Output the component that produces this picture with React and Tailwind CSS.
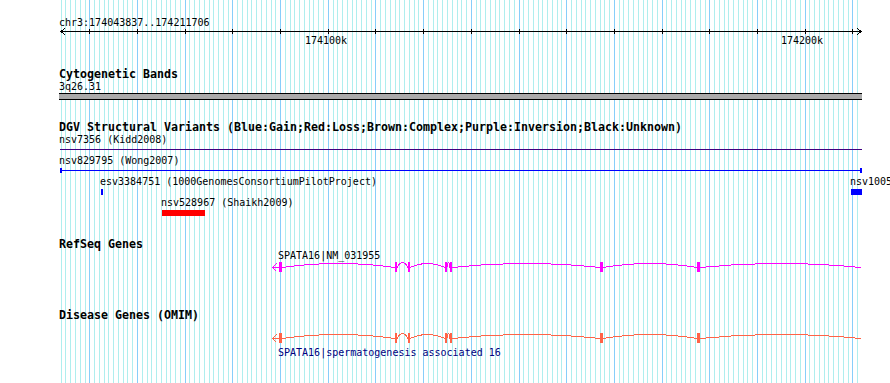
import React from "react";

const STEP = 4.769;
const ORIGIN = 89.3;

const gridLines = [];
for (let i = -6; i <= 161; i++) {
  gridLines.push({ x: Math.round(ORIGIN + i * STEP), major: i % 10 === 0 });
}
const majors = gridLines.filter((l) => l.major);

// exon x, width
const exons = [
  [279, 3],
  [395, 2],
  [408, 2],
  [445, 2],
  [450, 2],
  [600, 3],
  [697, 3],
];

const Gene = ({ color, height, ly }) => {
  const c = ly + 0.5;
  const arcs = [];
  for (let i = 0; i < exons.length; i++) {
    const x1 = exons[i][0] + exons[i][1];
    const x2 = i + 1 < exons.length ? exons[i + 1][0] : 861;
    const h = x2 - x1 < 16 ? 5 : 4;
    const mid = (x1 + x2) / 2;
    arcs.push(`M${x1} ${c} Q${mid} ${c - 2 * h} ${x2} ${c}`);
  }
  return (
    <svg className="block" width="890" height={height} shapeRendering="crispEdges">
      <rect x="272" y={ly} width="7" height="1" fill={color} />
      <polyline
        points={`276.5,${c - 4} 272.5,${c} 276.5,${c + 4}`}
        fill="none"
        stroke={color}
        strokeWidth="1"
      />
      {arcs.map((d) => (
        <path key={d} d={d} fill="none" stroke={color} strokeWidth="1" />
      ))}
      {exons.map(([x, w]) => (
        <rect key={x} x={x} y={ly - 5} width={w} height="10" fill={color} />
      ))}
    </svg>
  );
};

const Small = ({ children, className = "" }) => (
  <div className={`h-[11px] text-[10px] leading-[11px] whitespace-nowrap ${className}`}>{children}</div>
);

const Title = ({ children, className = "" }) => (
  <div className={`h-[12px] text-[11.63px] leading-[12px] font-bold whitespace-nowrap pl-[59px] ${className}`}>
    {children}
  </div>
);

export default function App() {
  return (
    <div className="relative w-[890px] h-[383px] overflow-hidden bg-white text-black font-['DejaVu_Sans_Mono',monospace]">
      <svg className="absolute inset-0" width="890" height="383" shapeRendering="crispEdges">
        {gridLines.map((l) => (
          <rect key={l.x} x={l.x} y="0" width="1" height="383" fill={l.major ? "#87cefa" : "#afeeee"} />
        ))}
      </svg>

      <div className="relative pt-[17px]">
        <Small className="pl-[59px]">chr3:174043837..174211706</Small>

        <svg className="block" width="890" height="7" shapeRendering="crispEdges">
          <rect x="60" y="3" width="801" height="1" fill="#000" />
          {majors.map((l) => (
            <rect key={l.x} x={l.x} y="1" width="1" height="5" fill="#000" />
          ))}
          <polyline points="65,0.5 60.5,3.5 65,6.5" fill="none" stroke="#000" strokeWidth="1" />
          <polyline points="857,0.5 861.5,3.5 857,6.5" fill="none" stroke="#000" strokeWidth="1" />
        </svg>
        <div className="relative h-[11px] text-[10px] leading-[11px]">
          <span className="absolute left-[305px] top-0">174100k</span>
          <span className="absolute left-[781px] top-0">174200k</span>
        </div>

        <Title className="mt-[22px]">Cytogenetic Bands</Title>
        <Small className="mt-px pl-[59px]">3q26.31</Small>
        <div className="mt-px ml-[59px] w-[803px] h-[7px] border-y border-black bg-[#aaaaaa]" />

        <Title className="mt-[21px]">
          DGV Structural Variants (Blue:Gain;Red:Loss;Brown:Complex;Purple:Inversion;Black:Unknown)
        </Title>
        <Small className="mt-px pl-[59px]">nsv7356 (Kidd2008)</Small>
        <div className="mt-[4px] ml-[60px] w-[802px] h-px bg-[#400080]" />
        <Small className="mt-[5px] pl-[59px]">nsv829795 (Wong2007)</Small>
        <svg className="block" width="890" height="10" shapeRendering="crispEdges">
          <rect x="60" y="4" width="802" height="1" fill="#0000ff" />
          <rect x="60" y="2" width="2" height="5" fill="#0000ff" />
          <rect x="860" y="2" width="2" height="5" fill="#0000ff" />
        </svg>
        <div className="relative h-[11px] text-[10px] leading-[11px] whitespace-nowrap">
          <span className="absolute left-[100px] top-0">esv3384751 (1000GenomesConsortiumPilotProject)</span>
          <span className="absolute left-[850px] top-0">nsv1005366 (Campbell2011)</span>
        </div>
        <svg className="block" width="890" height="10" shapeRendering="crispEdges">
          <rect x="101" y="2" width="2" height="6" fill="#0000ff" />
          <rect x="851" y="2" width="11" height="6" fill="#0000ff" />
        </svg>
        <Small className="pl-[161px]">nsv528967 (Shaikh2009)</Small>
        <svg className="block" width="890" height="10" shapeRendering="crispEdges">
          <rect x="162" y="2" width="43" height="6" fill="#ff0000" />
        </svg>

        <Title className="mt-[20px]">RefSeq Genes</Title>
        <Small className="pl-[278px]">SPATA16|NM_031955</Small>
        <Gene color="#ff00ff" height={14} ly={6} />

        <Title className="mt-[34px]">Disease Genes (OMIM)</Title>
        <Gene color="#ff6347" height={26} ly={17} />
        <Small className="pl-[278px] text-[#000080]">SPATA16|spermatogenesis associated 16</Small>
      </div>
    </div>
  );
}
